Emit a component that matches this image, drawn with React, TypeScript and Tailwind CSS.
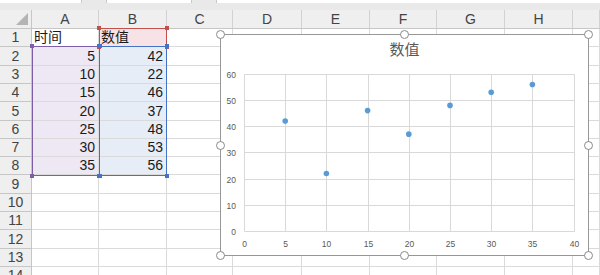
import React from "react";

const colWidths = [
  "w-[32px]",
  "w-[67px]",
  "w-[68px]",
  "w-[66px]",
  "w-[69px]",
  "w-[68px]",
  "w-[67px]",
  "w-[68px]",
  "w-[68px]",
  "w-[27px]",
];
const colNames = ["A", "B", "C", "D", "E", "F", "G", "H", ""];

const rowHeights = [
  "h-[18px]",
  "h-[19px]",
  "h-[18px]",
  "h-[18px]",
  "h-[19px]",
  "h-[18px]",
  "h-[18px]",
  "h-[18px]",
  "h-[19px]",
  "h-[18px]",
  "h-[18px]",
  "h-[19px]",
  "h-[18px]",
  "h-[18px]",
];

const data = [
  [5, 42],
  [10, 22],
  [15, 46],
  [20, 37],
  [25, 48],
  [30, 53],
  [35, 56],
];

const font = "font-['Liberation_Sans','Noto_Sans_CJK_SC',sans-serif]";

function cellBg(row: number, col: number) {
  if (row === 0 && col === 2) return "bg-[#f7e3e5]";
  if (row >= 1 && row <= 7 && col === 1) return "bg-[#ede8f4]";
  if (row >= 1 && row <= 7 && col === 2) return "bg-[#e6edf7]";
  return "bg-white";
}

function cellText(row: number, col: number) {
  if (row === 0 && col === 1) return "时间";
  if (row === 0 && col === 2) return "数值";
  if (row >= 1 && row <= 7 && (col === 1 || col === 2)) {
    return String(data[row - 1][col - 1]);
  }
  return "";
}

function Handle({ hidden }: { hidden?: boolean }) {
  return (
    <div
      className={`h-[9px] w-[9px] rounded-full border border-[#8a8a8a] bg-white ${
        hidden ? "invisible" : ""
      }`}
    />
  );
}

function HandleRow({ middle }: { middle: boolean }) {
  return (
    <div className="flex justify-between">
      <Handle />
      <Handle hidden={!middle} />
      <Handle />
    </div>
  );
}

// selection outline of a referenced range, with its four corner squares
function RangeBox({
  className,
  color,
}: {
  className: string;
  color: string;
}) {
  const dot = `h-[4px] w-[4px] ${color}`;
  return (
    <div
      className={`pointer-events-none absolute flex flex-col justify-between border ${className}`}
    >
      <div className="-m-[3px] flex justify-between">
        <div className={dot} />
        <div className={dot} />
      </div>
      <div className="-m-[3px] flex justify-between">
        <div className={dot} />
        <div className={dot} />
      </div>
    </div>
  );
}

function ScatterChart() {
  const x0 = 23;
  const y0 = 196;
  const xs = 41.2 / 5;
  const ys = 26.17 / 10;
  const px = (v: number) => Math.round(x0 + v * xs) + 0.5;
  const py = (v: number) => Math.round(y0 - v * ys) + 0.5;
  const xTicks = [0, 5, 10, 15, 20, 25, 30, 35, 40];
  const yTicks = [0, 10, 20, 30, 40, 50, 60];

  return (
    <div className="absolute left-[220px] top-[34px] h-[222px] w-[369px] border border-[#979797] bg-white">
      <div className="flex justify-center pt-[5px] text-[15px] leading-[20px] text-[#595959]">
        数值
      </div>
      <svg
        className="absolute left-0 top-0"
        width="368"
        height="221"
        viewBox="0 0 368 221"
      >
        {xTicks.map((t) => (
          <line
            key={`vx${t}`}
            x1={px(t)}
            x2={px(t)}
            y1={py(60)}
            y2={py(0)}
            stroke="#d9d9d9"
            strokeWidth="1"
          />
        ))}
        {yTicks.map((t) => (
          <line
            key={`hy${t}`}
            x1={px(0)}
            x2={px(40)}
            y1={py(t)}
            y2={py(t)}
            stroke="#d9d9d9"
            strokeWidth="1"
          />
        ))}
        {yTicks.map((t) => (
          <text
            key={`ly${t}`}
            x={15}
            y={py(t) + 3}
            textAnchor="end"
            fontSize="8.5"
            fill="#595959"
            fontFamily="Liberation Sans, sans-serif"
          >
            {t}
          </text>
        ))}
        {xTicks.map((t) => (
          <text
            key={`lx${t}`}
            x={px(t)}
            y={212}
            textAnchor="middle"
            fontSize="8.5"
            fill="#595959"
            fontFamily="Liberation Sans, sans-serif"
          >
            {t}
          </text>
        ))}
        {data.map(([x, y]) => (
          <circle
            key={x}
            cx={x0 + x * xs}
            cy={y0 - y * ys}
            r="2.8"
            fill="#5b9bd5"
          />
        ))}
      </svg>
      {/* sizing handles of the selected chart */}
      <div className="pointer-events-none absolute -inset-[5px] flex flex-col justify-between">
        <HandleRow middle />
        <HandleRow middle={false} />
        <HandleRow middle />
      </div>
    </div>
  );
}

export default function App() {
  return (
    <div className={`relative h-[275px] w-[600px] overflow-hidden bg-white ${font}`}>
      {/* formula bar remnant */}
      <div className="flex h-[10px] items-start gap-[24px] bg-[#e9e9e9]">
        <div className="h-[3px] w-[82px] border-r border-[#c8c8c8] bg-white" />
        <div className="h-[3px] w-[86px] border-x border-[#c8c8c8] bg-white" />
        <div className="h-[3px] flex-1 border-l border-[#c8c8c8] bg-white" />
      </div>

      {/* column headers */}
      <div className="flex h-[19px] border-b border-[#c6c6c6] bg-[#efefef]">
        <div
          className={`${colWidths[0]} flex shrink-0 items-end justify-end border-r border-[#c6c6c6] p-[3px]`}
        >
          <div className="h-0 w-0 border-b-[12px] border-l-[12px] border-b-[#b4b4b4] border-l-transparent" />
        </div>
        {colNames.map((name, i) => (
          <div
            key={i}
            className={`${colWidths[i + 1]} flex shrink-0 items-center justify-center border-r border-[#d2d2d2] text-[14px] text-[#444]`}
          >
            {name}
          </div>
        ))}
      </div>

      {/* rows */}
      {rowHeights.map((h, r) => (
        <div key={r} className={`flex ${h}`}>
          <div
            className={`${colWidths[0]} flex shrink-0 items-center justify-center border-b border-r border-[#c6c6c6] bg-[#efefef] text-[14px] text-[#444]`}
          >
            {r + 1}
          </div>
          {colNames.map((_, c) => {
            const text = cellText(r, c + 1);
            const isNum = r >= 1 && r <= 7;
            return (
              <div
                key={c}
                className={`${colWidths[c + 1]} flex shrink-0 items-center overflow-hidden border-b border-r border-[#dadada] ${cellBg(r, c + 1)} ${
                  isNum ? "justify-end pr-[3px]" : "pl-[2px]"
                } text-[14px] text-[#1a1a1a]`}
              >
                {text}
              </div>
            );
          })}
        </div>
      ))}

      {/* ranges referenced by the chart */}
      <RangeBox
        className="left-[32px] top-[46px] h-[130px] w-[68px] border-[#7d5fa8]"
        color="bg-[#7d5fa8]"
      />
      <RangeBox
        className="left-[99px] top-[28px] h-[19px] w-[68px] border-[#c0504d]"
        color="bg-[#c0504d]"
      />
      <RangeBox
        className="left-[99px] top-[46px] h-[130px] w-[68px] border-[#4472c4]"
        color="bg-[#4472c4]"
      />

      <ScatterChart />
    </div>
  );
}
